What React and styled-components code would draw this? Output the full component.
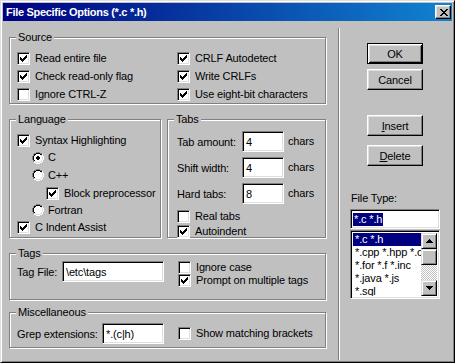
import React from 'react';
import styled, { createGlobalStyle } from 'styled-components';

const GlobalStyle = createGlobalStyle`
  html, body {
    margin: 0;
    padding: 0;
    background: #c0c0c0;
  }
  body {
    font-family: "Liberation Sans", Arial, sans-serif;
    font-size: 11px;
    letter-spacing: -0.15px;
    color: #000;
  }
  * {
    box-sizing: border-box;
  }
`;

const CHECK = ['......X', '.....XX', 'X...XXX', 'XX.XXX.', 'XXXXX..', '.XXX...', '..X....'];
const CLOSE = ['XX....XX', '.XX..XX.', '..XXXX..', '...XX...', '..XXXX..', '.XX..XX.', 'XX....XX'];
const UP = ['...X...', '..XXX..', '.XXXXX.', 'XXXXXXX'];
const DOWN = [...UP].reverse();
const RADIO = [
  '....DDDD....',
  '..DDBBBBDD..',
  '.DBBWWWWBBH.',
  '.DBWWWWWWLH.',
  'DBWWWWWWWWLH',
  'DBWWWWWWWWLH',
  'DBWWWWWWWWLH',
  'DBWWWWWWWWLH',
  '.DBWWWWWWLH.',
  '.DLLWWWWLLH.',
  '..HHLLLLHH..',
  '....HHHH....',
];
const DOT = ['.XX.', 'XXXX', 'XXXX', '.XX.'];
const PALETTE = { X: '#000', D: '#808080', B: '#000', W: '#fff', L: '#dfdfdf', H: '#fff' };

function Pixels({ rows, dx = 0, dy = 0 }) {
  return rows.flatMap((row, y) =>
    [...row].map((c, x) =>
      PALETTE[c] ? <rect key={`${x}-${y}`} x={x + dx} y={y + dy} width="1" height="1" fill={PALETTE[c]} /> : null
    )
  );
}

function Glyph({ rows }) {
  return (
    <svg width={rows[0].length} height={rows.length} shapeRendering="crispEdges">
      <Pixels rows={rows} />
    </svg>
  );
}

const Window = styled.div`
  width: 455px;
  height: 363px;
  display: flex;
  flex-direction: column;
  padding: 2px;
  background: #c0c0c0;
  border: 1px solid;
  border-color: #dfdfdf #000 #000 #dfdfdf;
  box-shadow: inset 1px 1px #fff, inset -1px -1px #808080;
`;

const TitleBar = styled.div`
  height: 18px;
  display: flex;
  align-items: center;
  justify-content: space-between;
  padding: 0 1px 0 3px;
  background: linear-gradient(90deg, #000080, #1084d0);
  color: #fff;
  font-weight: bold;
  font-size: 11px;
  letter-spacing: -0.3px;
`;

const CloseButton = styled.div`
  width: 16px;
  height: 14px;
  display: flex;
  align-items: center;
  justify-content: center;
  padding-left: 1px;
  background: #c0c0c0;
  border: 1px solid;
  border-color: #fff #000 #000 #fff;
  box-shadow: inset -1px -1px #808080, inset 1px 1px #dfdfdf;
`;

const Body = styled.div`
  flex: 1;
  display: flex;
`;

const LeftPane = styled.div`
  width: 336px;
  margin-top: 7px;
  padding: 9px 0 0 6px;
  border-right: 1px solid #808080;
  box-shadow: 1px 0 #fff;
`;

const RightPane = styled.div`
  flex: 1;
  display: flex;
  flex-direction: column;
  align-items: flex-start;
  padding: 22px 0 0 28px;
`;

const Group = styled.div`
  position: relative;
  width: ${(p) => p.$w}px;
  height: ${(p) => p.$h}px;
  margin-top: ${(p) => p.$mt || 0}px;
  border: 1px solid #808080;
  box-shadow: inset 1px 1px #fff, 1px 1px #fff;
  padding: ${(p) => p.$pad};
`;

const Legend = styled.span`
  position: absolute;
  top: -7px;
  left: 6px;
  padding: 0 2px;
  background: #c0c0c0;
  line-height: 13px;
`;

const GroupRow = styled.div`
  display: flex;
  gap: 6px;
  margin-top: 15px;
`;

const TwoColumns = styled.div`
  display: grid;
  grid-template-columns: ${(p) => p.$first}px auto;
  grid-auto-rows: 18px;
`;

const Stack = styled.div`
  display: flex;
  flex-direction: column;
`;

const Option = styled.div`
  display: flex;
  align-items: center;
  height: ${(p) => p.$h || 18}px;
  padding-left: ${(p) => p.$indent || 0}px;
  white-space: nowrap;
`;

const Caption = styled.span`
  margin-left: ${(p) => p.$gap || 5}px;
  line-height: 13px;
`;

const Box = styled.span`
  width: 13px;
  height: 13px;
  flex-shrink: 0;
  display: flex;
  align-items: center;
  justify-content: center;
  background: #fff;
  border: 1px solid;
  border-color: #808080 #fff #fff #808080;
  box-shadow: inset 1px 1px #000, inset -1px -1px #dfdfdf;
`;

const RadioSvg = styled.svg`
  flex-shrink: 0;
`;

const Field = styled.div`
  width: ${(p) => p.$w}px;
  height: ${(p) => p.$h || 21}px;
  margin-left: ${(p) => p.$ml || 0}px;
  display: flex;
  align-items: center;
  padding-left: 3px;
  background: #fff;
  border: 1px solid;
  border-color: #808080 #fff #fff #808080;
  box-shadow: inset 1px 1px #000, inset -1px -1px #dfdfdf;
  white-space: nowrap;
  overflow: hidden;
`;

const FieldRow = styled.div`
  display: flex;
  align-items: center;
  height: 21px;
  margin-bottom: ${(p) => p.$mb || 0}px;
`;

const FieldLabel = styled.span`
  width: ${(p) => p.$w}px;
  flex-shrink: 0;
  white-space: nowrap;
`;

const Button = styled.div`
  width: 56px;
  height: 21px;
  margin-top: ${(p) => p.$mt || 0}px;
  display: flex;
  align-items: center;
  justify-content: center;
  background: #c0c0c0;
  border: 1px solid;
  border-color: ${(p) => (p.$default ? '#000' : '#fff #000 #000 #fff')};
  box-shadow: ${(p) =>
    p.$default
      ? 'inset 1px 1px #fff, inset -1px -1px #000, inset 2px 2px #dfdfdf, inset -2px -2px #808080'
      : 'inset -1px -1px #808080, inset 1px 1px #dfdfdf'};
`;

const FileTypeLabel = styled.div`
  margin: 26px 0 0 -16px;
  line-height: 13px;
`;

const ComboEdit = styled(Field)`
  margin: 4px 0 0 -17px;
  padding-left: 2px;
`;

const Selected = styled.span`
  background: #000080;
  color: #fff;
  padding: 0 1px;
  line-height: 13px;
`;

const ListBox = styled.div`
  width: 90px;
  height: 69px;
  margin: 1px 0 0 -17px;
  display: flex;
  background: #fff;
  border: 1px solid;
  border-color: #808080 #fff #fff #808080;
  box-shadow: inset 1px 1px #000, inset -1px -1px #dfdfdf;
  padding: 2px;
`;

const Items = styled.div`
  flex: 1;
  overflow: hidden;
`;

const Item = styled.div`
  height: 13px;
  line-height: 13px;
  padding-left: 2px;
  white-space: nowrap;
  background: ${(p) => (p.$active ? '#000080' : 'transparent')};
  color: ${(p) => (p.$active ? '#fff' : '#000')};
`;

const ScrollBar = styled.div`
  width: 16px;
  display: flex;
  flex-direction: column;
`;

const ScrollButton = styled.div`
  width: 16px;
  height: 16px;
  display: flex;
  align-items: center;
  justify-content: center;
  background: #c0c0c0;
  border: 1px solid;
  border-color: #dfdfdf #000 #000 #dfdfdf;
  box-shadow: inset 1px 1px #fff, inset -1px -1px #808080;
`;

const Track = styled.div`
  flex: 1;
  background-image: conic-gradient(#fff 25%, #c0c0c0 0 50%, #fff 0 75%, #c0c0c0 0);
  background-size: 2px 2px;
`;

function Check({ checked }) {
  return <Box>{checked && <Glyph rows={CHECK} />}</Box>;
}

function Radio({ checked }) {
  return (
    <RadioSvg width="12" height="12" shapeRendering="crispEdges">
      <Pixels rows={RADIO} />
      {checked && <Pixels rows={DOT} dx={4} dy={4} />}
    </RadioSvg>
  );
}

function CheckOption({ checked, label, indent, h }) {
  return (
    <Option $indent={indent} $h={h}>
      <Check checked={checked} />
      <Caption>{label}</Caption>
    </Option>
  );
}

function RadioOption({ checked, label, indent, h }) {
  return (
    <Option $indent={indent} $h={h}>
      <Radio checked={checked} />
      <Caption $gap={4}>{label}</Caption>
    </Option>
  );
}

export default function App() {
  return (
    <>
      <GlobalStyle />
      <Window>
        <TitleBar>
          <span>File Specific Options (*.c *.h)</span>
          <CloseButton>
            <Glyph rows={CLOSE} />
          </CloseButton>
        </TitleBar>
        <Body>
          <LeftPane>
            <Group $w={317} $h={67} $pad="11px 0 0 7px">
              <Legend>Source</Legend>
              <TwoColumns $first={160}>
                <CheckOption checked label="Read entire file" />
                <CheckOption checked label="CRLF Autodetect" />
                <CheckOption checked label="Check read-only flag" />
                <CheckOption checked label="Write CRLFs" />
                <CheckOption label="Ignore CTRL-Z" />
                <CheckOption checked label="Use eight-bit characters" />
              </TwoColumns>
            </Group>

            <GroupRow>
              <Group $w={152} $h={119} $pad="11px 0 0 7px">
                <Legend>Language</Legend>
                <Stack>
                  <CheckOption checked label="Syntax Highlighting" />
                  <RadioOption checked label="C" indent={15} h={17} />
                  <RadioOption label="C++" indent={15} />
                  <CheckOption checked label="Block preprocessor" indent={29} />
                  <RadioOption label="Fortran" indent={15} h={16} />
                  <CheckOption checked label="C Indent Assist" h={19} />
                </Stack>
              </Group>
              <Group $w={159} $h={119} $pad="11px 0 0 9px">
                <Legend>Tabs</Legend>
                <FieldRow $mb={5}>
                  <FieldLabel $w={65}>Tab amount:</FieldLabel>
                  <Field $w={42}>4</Field>
                  <Caption $gap={4}>chars</Caption>
                </FieldRow>
                <FieldRow $mb={5}>
                  <FieldLabel $w={65}>Shift width:</FieldLabel>
                  <Field $w={42}>4</Field>
                  <Caption $gap={4}>chars</Caption>
                </FieldRow>
                <FieldRow $mb={4}>
                  <FieldLabel $w={65}>Hard tabs:</FieldLabel>
                  <Field $w={42}>8</Field>
                  <Caption $gap={4}>chars</Caption>
                </FieldRow>
                <CheckOption label="Real tabs" h={16} />
                <CheckOption checked label="Autoindent" h={15} />
              </Group>
            </GroupRow>

            <Group $w={317} $h={47} $mt={15} $pad="7px 0 0 7px">
              <Legend>Tags</Legend>
              <TwoColumns $first={161}>
                <FieldRow>
                  <FieldLabel $w={45}>Tag File:</FieldLabel>
                  <Field $w={102} $h={21}>\etc\tags</Field>
                </FieldRow>
                <Stack>
                  <CheckOption label="Ignore case" />
                  <CheckOption checked label="Prompt on multiple tags" />
                </Stack>
              </TwoColumns>
            </Group>

            <Group $w={317} $h={36} $mt={12} $pad="10px 0 0 7px">
              <Legend>Miscellaneous</Legend>
              <TwoColumns $first={161}>
                <FieldRow>
                  <FieldLabel $w={85}>Grep extensions:</FieldLabel>
                  <Field $w={62}>*.(c|h)</Field>
                </FieldRow>
                <CheckOption label="Show matching brackets" h={21} />
              </TwoColumns>
            </Group>
          </LeftPane>

          <RightPane>
            <Button $default>OK</Button>
            <Button $mt={5}>Cancel</Button>
            <Button $mt={25}>
              <span><u>I</u>nsert</span>
            </Button>
            <Button $mt={9}>
              <span><u>D</u>elete</span>
            </Button>
            <FileTypeLabel>File Type:</FileTypeLabel>
            <ComboEdit $w={90} $h={20}>
              <Selected>*.c *.h</Selected>
            </ComboEdit>
            <ListBox>
              <Items>
                <Item $active>*.c *.h</Item>
                <Item>*.cpp *.hpp *.c</Item>
                <Item>*.for *.f *.inc</Item>
                <Item>*.java *.js</Item>
                <Item>*.sql</Item>
              </Items>
              <ScrollBar>
                <ScrollButton>
                  <Glyph rows={UP} />
                </ScrollButton>
                <ScrollButton />
                <Track />
                <ScrollButton>
                  <Glyph rows={DOWN} />
                </ScrollButton>
              </ScrollBar>
            </ListBox>
          </RightPane>
        </Body>
      </Window>
    </>
  );
}
